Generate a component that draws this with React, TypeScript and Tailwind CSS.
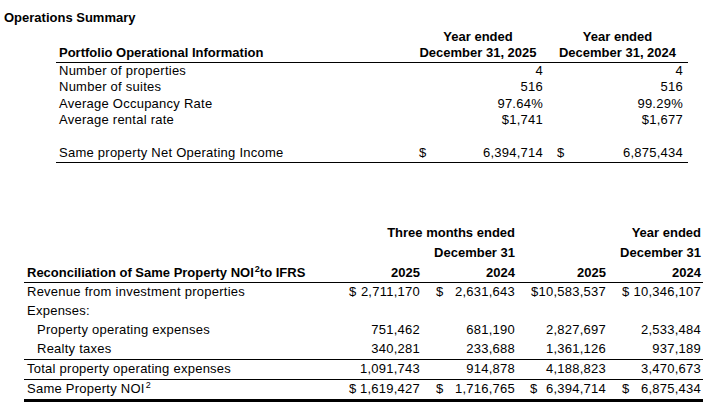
const font = { fontFamily: '"Liberation Sans", Arial, sans-serif' };

const topRows = [
  { label: "Number of properties", a: "4", b: "4" },
  { label: "Number of suites", a: "516", b: "516" },
  { label: "Average Occupancy Rate", a: "97.64%", b: "99.29%" },
  { label: "Average rental rate", a: "$1,741", b: "$1,677" },
];

type Cell = { v: string; cur?: boolean; joined?: boolean };

type RecRow = {
  label: React.ReactNode;
  indent?: boolean;
  cells: Cell[];
  border?: string;
};

const Sup = () => <span className="relative -top-[5px] text-[9px] leading-none pl-[1px]">2</span>;

const recRows: RecRow[] = [
  {
    label: "Revenue from investment properties",
    cells: [
      { v: "2,711,170", cur: true },
      { v: "2,631,643", cur: true },
      { v: "$10,583,537", joined: true },
      { v: "10,346,107", cur: true },
    ],
  },
  { label: "Expenses:", cells: [{ v: "" }, { v: "" }, { v: "" }, { v: "" }] },
  {
    label: "Property operating expenses",
    indent: true,
    cells: [{ v: "751,462" }, { v: "681,190" }, { v: "2,827,697" }, { v: "2,533,484" }],
  },
  {
    label: "Realty taxes",
    indent: true,
    cells: [{ v: "340,281" }, { v: "233,688" }, { v: "1,361,126" }, { v: "937,189" }],
    border: "border-b border-black",
  },
  {
    label: "Total property operating expenses",
    cells: [{ v: "1,091,743" }, { v: "914,878" }, { v: "4,188,823" }, { v: "3,470,673" }],
    border: "border-b border-black",
  },
  {
    label: (
      <>
        Same Property NOI<Sup />
      </>
    ),
    cells: [
      { v: "1,619,427", cur: true },
      { v: "1,716,765", cur: true },
      { v: "6,394,714", cur: true },
      { v: "6,875,434", cur: true },
    ],
    border: "border-b-[3px] border-black",
  },
];

const cellPad = ["pl-[5px]", "pl-[14px]", "pl-[13px]", "pl-[14px]"];

export default function App() {
  return (
    <div className="w-[723px] h-[410px] bg-white text-black text-[13px] overflow-hidden" style={font}>
      <div className="pt-[10px] pl-[4px] h-[26.5px] leading-[16.5px] font-bold">Operations Summary</div>

      {/* Portfolio table */}
      <div className="ml-[56px] w-[632px] mt-[2px] tracking-[0.25px] leading-[16.5px]">
        <div className="grid grid-cols-[353px_138px_141px] font-bold tracking-normal">
          <div className="h-[16.5px]" />
          <div className="h-[16.5px] text-center">Year ended</div>
          <div className="h-[16.5px] text-center">Year ended</div>
        </div>
        <div className="grid grid-cols-[353px_138px_141px] font-bold tracking-normal border-b border-black">
          <div className="h-[16.5px] pl-[3px]">Portfolio Operational Information</div>
          <div className="h-[16.5px] text-center">December 31, 2025</div>
          <div className="h-[16.5px] text-center">December 31, 2024</div>
        </div>
        {topRows.map((r) => (
          <div key={r.label} className="grid grid-cols-[353px_138px_141px] h-[16.5px]">
            <div className="pl-[3px]">{r.label}</div>
            <div className="text-right pr-[4px]">{r.a}</div>
            <div className="text-right pr-[5px]">{r.b}</div>
          </div>
        ))}
        <div className="h-[16.5px]" />
        <div className="grid grid-cols-[353px_138px_141px] h-[17.5px] border-b border-black">
          <div className="pl-[3px]">Same property Net Operating Income</div>
          <div className="flex justify-between pl-[10px] pr-[4px]">
            <span>$</span>
            <span>6,394,714</span>
          </div>
          <div className="flex justify-between pl-[10px] pr-[5px]">
            <span>$</span>
            <span>6,875,434</span>
          </div>
        </div>
      </div>

      {/* Reconciliation table */}
      <div className="ml-[24px] w-[679px] mt-[60px] tracking-[0.25px]">
        <div className="grid grid-cols-[320px_78px_95px_91px_95px] font-bold tracking-normal leading-[19px]">
          <div className="h-[20px]" />
          <div className="h-[20px] col-span-2 text-right pr-[2px]">Three months ended</div>
          <div className="h-[20px] col-span-2 text-right pr-[2px]">Year ended</div>
          <div className="h-[20px]" />
          <div className="h-[20px] col-span-2 text-right pr-[2px]">December 31</div>
          <div className="h-[20px] col-span-2 text-right pr-[2px]">December 31</div>
        </div>
        <div className="grid grid-cols-[320px_78px_95px_91px_95px] font-bold tracking-normal leading-[19px] h-[19px] border-b border-black box-content">
          <div className="pl-[3px]">
            Reconciliation of Same Property NOI<Sup />to IFRS
          </div>
          <div className="text-right pr-[2px]">2025</div>
          <div className="text-right pr-[2px]">2024</div>
          <div className="text-right pr-[2px]">2025</div>
          <div className="text-right pr-[2px]">2024</div>
        </div>
        {recRows.map((r, i) => (
          <div
            key={i}
            className={`grid grid-cols-[320px_78px_95px_91px_95px] h-[19px] leading-[17px] box-content ${r.border ?? ""}`}
          >
            <div className={r.indent ? "pl-[13px]" : "pl-[3px]"}>{r.label}</div>
            {r.cells.map((c, j) => (
              <div key={j} className={`flex justify-between pr-[2px] ${cellPad[j]}`}>
                <span>{c.cur ? "$" : ""}</span>
                <span>{c.v}</span>
              </div>
            ))}
          </div>
        ))}
      </div>
    </div>
  );
}
